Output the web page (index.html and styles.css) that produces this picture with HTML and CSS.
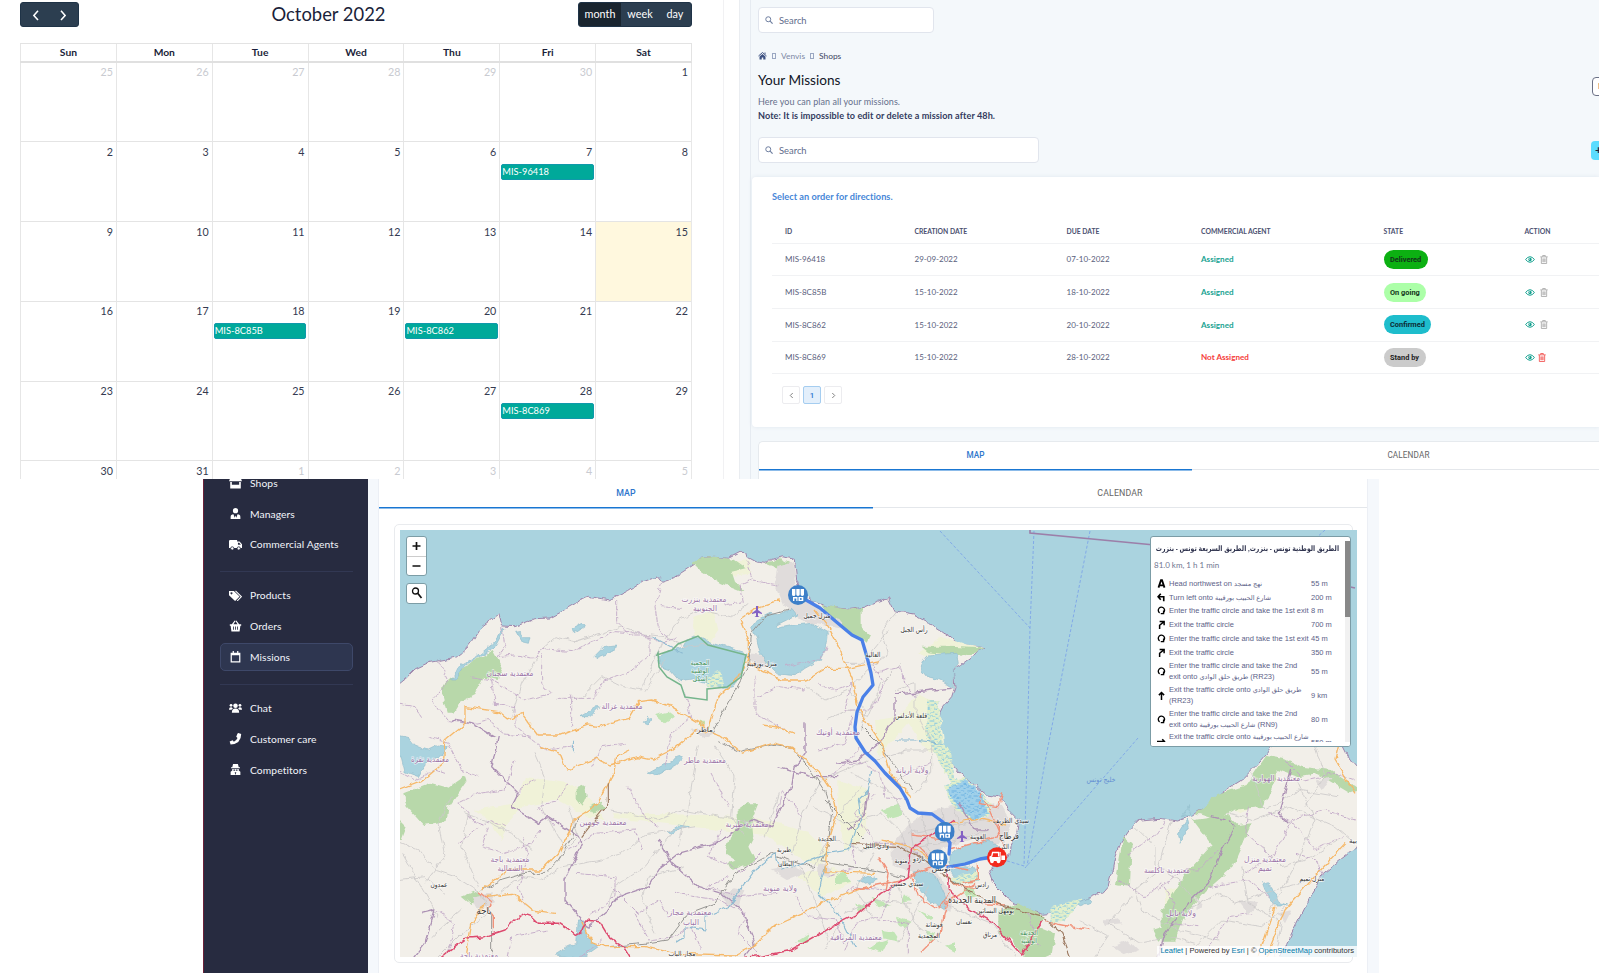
FILE: index.html
```html
<!DOCTYPE html>
<html lang="en">
<head>
<meta charset="utf-8">
<title>Missions</title>
<link rel="stylesheet" href="styles.css">
</head>
<body>
<svg class="defs" width="0" height="0">
  <symbol id="search" viewBox="0 0 16 16"><circle cx="6.5" cy="6.5" r="5" fill="none" stroke="currentColor" stroke-width="2"/><path d="M10.2 10.2l5 5" stroke="currentColor" stroke-width="2.4"/></symbol>
  <symbol id="eye" viewBox="0 0 18 12"><path d="M1 6Q9-4 17 6Q9 16 1 6z" fill="none" stroke="currentColor" stroke-width="1.8"/><circle cx="9" cy="6" r="3" fill="currentColor"/><circle cx="8" cy="5" r="1" fill="#fff"/></symbol>
  <symbol id="trash" viewBox="0 0 14 17"><path d="M0 3.5h14M4.5 3V1h5v2M2 4v12h10V4M5 6.500v7M7 6.500v7M9 6.500v7" fill="none" stroke="currentColor" stroke-width="1.500"/></symbol>
  <symbol id="shop" viewBox="0 0 20 20"><circle cx="10" cy="10" r="10" fill="#3c7fc8"/><path d="M4 4h3.400v5.500a1.700 1.500 0 0 1-3.400 0zM8.300 4h3.400v5.500a1.700 1.500 0 0 1-3.400 0zM12.600 4H16v5.500a1.700 1.500 0 0 1-3.400 0zM5 12h4.500v4H8.300v-2.500H6.400V16H5zM10.500 12h4.800v4h-4.800z" fill="#fff"/><circle cx="12.800" cy="14" r="1" fill="#3c7fc8"/></symbol>
  <symbol id="loop" viewBox="0 0 12 12"><path d="M3.500 9.200A4.200 4.200 0 1 1 8 9.400M8.800 6v4.200H5" fill="none" stroke="#000" stroke-width="1.800"/></symbol>
  <symbol id="slight" viewBox="0 0 12 12"><path d="M3.500 12V7L9 2.500M3.500 2H9.500V7" fill="none" stroke="#000" stroke-width="2"/></symbol>
</svg>

<main class="page">
<div class="top">
  <section class="calendar">
    <header class="cal-head">
      <div class="arrows"><svg viewBox="0 0 59 25"><path d="M17 8.500l-4.500 5 4.500 5M42 8.500l4.500 5-4.500 5" fill="none" stroke="#fff" stroke-width="1.700"/></svg></div>
      <h1>October 2022</h1>
      <div class="views"><span class="on">month</span><span>week</span><span>day</span></div>
    </header>
    <div class="days">
      <b>Sun</b><b>Mon</b><b>Tue</b><b>Wed</b><b>Thu</b><b>Fri</b><b>Sat</b>
    </div>
    <div class="cells">
      <div class="off">25</div><div class="off">26</div><div class="off">27</div><div class="off">28</div><div class="off">29</div><div class="off">30</div><div>1</div>
      <div>2</div><div>3</div><div>4</div><div>5</div><div>6</div><div>7<p>MIS-96418</p></div><div>8</div>
      <div>9</div><div>10</div><div>11</div><div>12</div><div>13</div><div>14</div><div class="today">15</div>
      <div>16</div><div>17</div><div>18<p>MIS-8C85B</p></div><div>19</div><div>20<p>MIS-8C862</p></div><div>21</div><div>22</div>
      <div>23</div><div>24</div><div>25</div><div>26</div><div>27</div><div>28<p>MIS-8C869</p></div><div>29</div>
      <div>30</div><div>31</div><div class="off">1</div><div class="off">2</div><div class="off">3</div><div class="off">4</div><div class="off">5</div>
    </div>
  </section>

  <section class="missions">
    <div class="intro">
      <div class="search short"><svg><use href="#search"/></svg>Search</div>
      <nav class="crumbs">
        <svg viewBox="0 0 18 16"><path d="M1 8l8-7 8 7" fill="none" stroke="#3f5383" stroke-width="2"/><path d="M3 9l6-5.200L15 9v6h-4.500v-4h-3v4H3zM13 1h2v4l-2-2z" fill="#3f5383"/></svg>
        <i></i><span>Venvis</span><i></i><span class="here">Shops</span>
      </nav>
      <div class="title-row"><h2>Your Missions</h2></div>
      <p class="lead">Here you can plan all your missions.</p>
      <p class="note">Note: It is impossible to edit or delete a mission after 48h.</p>
      <div class="search long"><svg><use href="#search"/></svg>Search</div>
      <span class="edge-btn outline">N</span>
      <span class="edge-btn add">+</span>
    </div>
    <div class="orders">
      <h3>Select an order for directions.</h3>
      <div class="table">
        <div class="tr th"><span>ID</span><span>CREATION DATE</span><span>DUE DATE</span><span>COMMERCIAL AGENT</span><span>STATE</span><span>ACTION</span></div>
        <div class="tr"><span>MIS-96418</span><span>29-09-2022</span><span>07-10-2022</span><span class="ok">Assigned</span><span><em class="delivered">Delivered</em></span><span class="acts"><svg class="eye"><use href="#eye"/></svg><svg class="bin"><use href="#trash"/></svg></span></div>
        <div class="tr"><span>MIS-8C85B</span><span>15-10-2022</span><span>18-10-2022</span><span class="ok">Assigned</span><span><em class="going">On going</em></span><span class="acts"><svg class="eye"><use href="#eye"/></svg><svg class="bin"><use href="#trash"/></svg></span></div>
        <div class="tr"><span>MIS-8C862</span><span>15-10-2022</span><span>20-10-2022</span><span class="ok">Assigned</span><span><em class="confirmed">Confirmed</em></span><span class="acts"><svg class="eye"><use href="#eye"/></svg><svg class="bin"><use href="#trash"/></svg></span></div>
        <div class="tr"><span>MIS-8C869</span><span>15-10-2022</span><span>28-10-2022</span><span class="no">Not Assigned</span><span><em class="standby">Stand by</em></span><span class="acts"><svg class="eye"><use href="#eye"/></svg><svg class="bin red"><use href="#trash"/></svg></span></div>
      </div>
      <div class="pager">
        <span><svg viewBox="0 0 6 8"><path d="M4.500 1L1.500 4l3 3"/></svg></span><span class="on">1</span><span><svg viewBox="0 0 6 8"><path d="M1.500 1l3 3-3 3"/></svg></span>
      </div>
    </div>
    <div class="tabs upper"><span class="on">MAP</span><span>CALENDAR</span></div>
  </section>
</div>

<div class="bottom">
  <aside class="side">
    <a><svg viewBox="0 0 16 14"><path d="M2 0h12l2 5H0zM1.500 6h2v3.500h9V6h2v8h-13z"/></svg>Shops</a>
    <a><svg viewBox="0 0 16 14"><circle cx="8" cy="3.200" r="3.200"/><path d="M2 14V11Q2 7.500 5.500 7.500L7 12l1-3 1 3 1.500-4.500Q14 7.500 14 11v3z"/></svg>Managers</a>
    <a><svg viewBox="0 0 16 14"><path fill-rule="evenodd" d="M1 1h9v2h3l3 3.500V11H0V2zM11 4.500V7h3.600L12.600 4.500z"/><circle cx="4" cy="11.500" r="2" stroke="#272b40"/><circle cx="12" cy="11.500" r="2" stroke="#272b40"/></svg>Commercial Agents</a>
    <hr>
    <a><svg viewBox="0 0 16 14"><path fill-rule="evenodd" d="M0 1h6l7 7-5.500 5.500L0 6.500zM3 2.800a1.200 1.200 0 1 0 .1 0z"/><path d="M8 1l7.200 7-5.200 5.500" fill="none" stroke="#fff" stroke-width="1.300"/></svg>Products</a>
    <a><svg viewBox="0 0 16 14"><path fill-rule="evenodd" d="M1 5h2.500L7 .5l1 .8L5.500 5h5L8 1.300l1-.8L12.500 5H15v2h-1l-1 7H3L2 7H1zM5 8v4h1V8zM7.500 8v4h1V8zM10 8v4h1V8z"/></svg>Orders</a>
    <a class="on"><svg viewBox="0 0 16 14"><path fill-rule="evenodd" d="M2 2h2.500V0H6v2h4V0h1.500v2H14v12H2zM3.500 5v7.500h9V5z"/></svg>Missions</a>
    <hr>
    <a><svg viewBox="0 0 16 14"><circle cx="8" cy="4.500" r="2.800"/><circle cx="2.500" cy="4" r="1.700"/><circle cx="13.500" cy="4" r="1.700"/><path d="M3.500 13q0-5 4.500-5t4.500 5zM0 9q0-2.800 3-2.500L4.800 8 3 9.500H0zM16 9q0-2.800-3-2.500L11.200 8 13 9.500h3z"/></svg>Chat</a>
    <a><svg viewBox="0 0 16 14"><path d="M11.500 0L15 1q0 12-13 13L.8 10.500 4.500 8.800 6 10.600q3-1.300 4.500-4.600L8.900 4.500 10.500.5z" /></svg>Customer care</a>
    <a><svg viewBox="0 0 16 14"><path fill-rule="evenodd" d="M5 0h6l1 4h1.500v1.200h-11V4H4zM4 6h8v2l2 1.500V14H2V9.500L4 8zM5.500 6.800v1.400h2V6.800zM8.500 6.800v1.400h2V6.800zM7 10l1 3.500L9 10z"/></svg>Competitors</a>
  </aside>
  <section class="content">
    <div class="tabs lower"><span class="on">MAP</span><span>CALENDAR</span></div>
    <div class="map-card">
    <div class="map">
<svg class="world" viewBox="400 530 957 427">
<defs>
<filter id="rough" filterUnits="userSpaceOnUse" x="390" y="520" width="980" height="450" color-interpolation-filters="sRGB"><feTurbulence type="fractalNoise" baseFrequency=".12" numOctaves="2" seed="4"/><feDisplacementMap in="SourceGraphic" scale="6" xChannelSelector="R" yChannelSelector="G"/></filter>
<pattern id="marsh" width="22" height="15" patternUnits="userSpaceOnUse"><rect width="22" height="15" fill="#e2efcb"/><path d="M1 3h11M12 10h9" stroke="#7fc5e6" stroke-width="3"/></pattern>
<pattern id="flat" width="22" height="15" patternUnits="userSpaceOnUse"><rect width="22" height="15" fill="#9fd0ea"/><path d="M1 3h12M12 10h9" stroke="#62ace0" stroke-width="2.500"/></pattern>
</defs>
<rect x="390" y="520" width="980" height="450" fill="#aad3df"/>
<g filter="url(#rough)">
<g class="land">
<path transform="translate(395 520) scale(.33333)" d="M-10 510L30 478 60 447 100 428 130 422 180 412 215 385 235 360 260 320 312 280 320 318 360 320 420 296 465 294 510 270 545 250 548 240 580 229 620 236 645 240 700 212 745 182 785 168 800 187 830 177 900 132 915 115 960 112 1000 115 1035 97 1052 98 1056 112 1080 125 1110 130 1130 118 1165 110 1198 118 1205 180 1215 205 1245 240 1265 250 1305 262 1365 268 1405 262 1445 245 1480 233 1500 275 1555 285 1595 305 1635 330 1670 355 1685 375 1735 380 1772 383 1740 395 1725 415 1705 430 1685 440 1675 455 1680 500 1670 530 1645 560 1635 580 1630 610 1635 640 1650 690 1668 725 1695 760 1745 800 1775 825 1810 830 1830 850 1845 875 1870 900 1865 940 1845 980 1840 1010 1805 1035 1780 1050 1795 1090 1835 1130 1885 1165 1945 1183 1985 1178 2045 1150 2120 1118 2140 1095 2150 1060 2160 1010 2173 975 2190 950 2205 928 2235 900 2295 895 2345 903 2395 885 2445 850 2485 815 2540 780 2580 740 2615 700 2627 680 2700 640 2800 640 2845 680 2865 720 2900 760L2900 970 2835 1020 2785 1060 2745 1130 2705 1210 2650 1320L-10 1320Z"/>
</g>
<g transform="translate(395 520) scale(.33333)">
<g class="field">
<path d="M895 290l60-20 15 60-50 70-25-45zM970 130l90-10 10 40-70 10zM390 770l130 20 70 50 40 60-50-10-90-50-110 20-40 40-20 60-40-60-40-30 120-20zM650 880l300 5 190 20 100 30 60 60-20 50-80-40-90-60-450-50zM1330 780l90 30-10 140-60 50-20-120zM1200 1060l120-20 50 50-90 40zM1440 600l70-10 60-70 60 30 20 140-50 10-60-90-90 100z"/>
<path d="M1570 400l70-50 70 25 60 8-60 15-130 10zM2470 840l90-50 20 60-40 30zM2310 1110l80-20 10 60-90 90z"/></g>
<g class="wood">
<path d="M138 500l30-25 60-50 40-20 25-15 30 55-15 35-40-10-30 55-40 20-20 33-20 0zM895 130l20-15 45-5 60 10 35 25-45 10 10 30 35 35-75-30-60-35zM1110 130l45-15 40 20-35 15zM1275 255l90 14 35-6v60l28 25-10 20-30-14-70-50zM1580 380l80 0 110 5-70 22-100-10zM25 820l80-32 55 15 50-35 5 15-55 80-5 40-70 12-50-55zM15 900l20 20-15 40-20 0zM1025 870l30-20 35 0-20 50 5 50-15 30 20 40-30 20-60-40 15-50 20-30zM1000 1030l50-15 20 10-60 25zM545 805l25-10 5 30-15 35-15-20zM580 860l40-15 10 20-30 20zM200 1130l50-20 20 20-40 25z"/>
<path d="M2615 705l55 10 50 25 90 10 85 60-30 10-100-60-60 10-60-20 0 20-40 90-90 10-50 30-60-20 60-55 90-30zM2185 950l25 20-5 130-45-5zM2400 900l100-15 30 30 40-5-60 135-80 70-60 70-30 80-40 0 0-90 70-110 80-90-60-80zM1810 1170l60-20 80 40-20 30 50 20-10 60-70 30-50-70-40-20zM2270 1230l30-10 10 30-20 15z"/>
</g>
<g class="wood small"><path d="M780 585l40-10 20 15-30 20zM910 605l20 0 0 10-20 0zM1320 1070l30-15 20 30-50 10zM1430 1130l60 25-40 10zM1500 1190l50 15-20 20-20-10zM1570 1170l50 25-10 10zM1460 1230l35 5 20 30-50-10zM1200 1265l40-25 0 30zM1460 870l50-20 15 35-35 10zM1700 1110l30-8 20 30-30 5zM1420 1280l60-20-20 40zM1380 1150l30 10-15 20zM1590 1230l30 10-10 30zM1530 1120l20 20-30 5zM1650 1280l30-10 0 25z"/></g>
<g class="urban">
<path d="M1150 140l45-15 10 80 50 50 90 55-10 15-110-20-60-50-25-60zM1060 400l60 5 20 30-50 10-30-25zM1540 915l40-30 60-20 40-10 60 20 50 0 20-30 30 50-10 60-30 20-60-20-100 30-20 60 50 80 0 50-40-10-80-110-60-20 0-60zM1740 860l60-10 50 60-20 60-40-40zM885 630l50-10 25 20-30 15zM1130 1050l60-10 40 20-50 20zM230 1130l60-10 10 30-50 20zM2120 1195l40 0 20 15-50 5zM1270 1030l40 15-10 30-30-10zM985 1120l35-15 25 5-15 50-40-10zM2760 780l50-10-30 40zM2530 1140l60 10-30 30zM2650 1180l40-10-20 40zM2400 1130l25 30-20 10zM2150 1280l50-20 30 30-40 15z"/></g>
<g class="water">
<path d="M1085 300l40-20 30 5 35-20 15 20-60 30 0 10 50-10 55-5 50 28-5 42-20 40-45 25-30 22-50-5-30-28-25-37-10-40-15-35z"/>
<path d="M790 410l30-18 45-10 10-20 30-15 40 20 60 18 50 15-10 50-30 50-30 5-40-10-50-15-40 5-30-35-30-10zM1575 445l20-40 90-5 5 30-15 20 0 55-40-25-40-10zM535 325l28-15 5 8-30 20zM597 410l30-30 35-5-5 18-50 20zM360 330l25 20 20 0-5 20-20-5zM170 480l15-35 60-35 50-40 30-45 5 0-30 55-40 25-50 30-30 45zM0 640l40 10 20 25 40 15 30-15 30 5-20 25-50 30-20 35-40-15zM555 590l50-30 10 0-30 30zM745 610l12-18 8 5-8 18zM760 760l90-50 12 5-20 20-60 32zM820 935l30-20 30 5-50 20zM550 1200l20 0 5 50 35 30-50 35-80-10 40-25 25-10z"/>
<path d="M1665 1005l35-25 85-20 20 25-15 28-60 17-65 15zM1665 1052l45-12 40 5-20 22-50 5zM1555 1060l40-10 30 20 30 70-10 25-40-20-40-50zM2360 890l20-30 10 30zM2350 940l25-40 5 20-25 50zM2600 1080l30 20 20 45 25 10-40 0-20-35zM2040 1150l40-15 10 10-30 12zM1390 1080l40-15 20 15-40 10z"/></g>
<path fill="url(#marsh)" d="M1600 540l30 0 10 120 30 90-20 10-40-80-20-30zM1630 660l30 20 20 90 30 30-30 10-40-80zM935 470l40-20 10 50-50 5zM1970 1160l90-25-10 20-40 50-45 5zM1670 1070l80-15 0 30-70 10zM1650 800l60-30 80 80-10 40-50 10-60-40z"/>
<path fill="url(#flat)" d="M1660 810l50-30 50 35 15 65-35 20-50-35-30-50z"/>
</g>
<g transform="translate(395 520) scale(.33333)" class="lines">
<path class="minor" d="M440 385l40-35 60 15 60-20 80-25 50 20 80 10 60 30 80-10M560 530l60-60 60 30 60 10 60-140M750 515l60-100M810 360l40-60 60-30 100 20 50-40M350 590l30-100 50-80M0 960l70 30 50 60 60 20 80 50 20 60-80 60-90 90M200 880l70 20 80 40 60 50M420 700l30 70-10 90 70 130M300 1130l80-60 60 10 60-40 120-20 60-20 80-60 140-20M640 1160l20-60 90-60 80-100M650 870l140 30 70-30 120 20 120 20M850 980l30-120 30-190M960 680l60 90-10 120 40 60M1240 1070l60-110 20-60 80-100M1110 950l40-130M1190 1010l30-120 60-110 140-60M1300 1260l-60-170-30-60M520 860l30 90-40 40M90 1090l60-80-20-100 40-80M110 1250l90-80M250 1100l-50-120 20-100M780 1240l-40-110 20-60 110-30M0 1080l90-10 60 50M20 1000l110 190"/>
<path class="minor" d="M1290 600l70-30 60 20 40-100 60-60M1230 500l60 40 70-30 50 60-10 60M1370 500l60-60 50-40-20-70 50-60M1480 330l-80 100-50 0M1500 510l60-20 0 80 50 100 0 90-50 60M1440 720l90-30 90 0M1370 760l120 60 50 80M1250 860l110 50 100-30 60 60 30 90M1320 960l80 30 90-10M1440 1000l-60 110 60 90M1500 1080l60 130 80 60M1600 1100l-90 170M1640 1150l150 60 70 100M1350 1180l90-40 110 10M1290 1290l50-90M1540 900l20 100 50 40M1580 880l30 140M1640 860l10 100M1680 860l20 90M1540 940l120-20 120-20M1540 980l110-10 130-40"/>
<path class="minor" d="M2220 920l60 60 0 80-60 50 20 60 110 60 120 30M2330 900l-40 140 60 40 50 60M2210 1130l-70 80 90 60 100-20 70 20M2380 1170l90-50 50 30 120-40 110-30M2500 880l80 20 100-40 140 60 60 50M2570 760l40 110 100-60 120 20M2600 980l60 60 90-30 80-50M2540 1040l20 110 100 60-20 100M2700 770l60 130-50 120-90 160M2400 1280l80-80 120 20 70-60M2750 650l40 120-60 90M2050 1200l90 50-40 60"/>
<path class="admin" d="M130 422l30 60-50 60 50 60 70 10 50-10 50 40 80 10M320 320l10 60-20 30 50-5 60 10 20-30 90 10 80-40 50-20 80 5 60 30 50-20M665 240v70l40 35 60 0 0 60-60 50-80 30-30 50-110 0M800 190l-20 70 10 60 30 40M860 265l-60-5M1055 125l20 50-40 20 10 50-60 10M1060 180l90 15M440 400l0 90 30 30-80 20-100-60-60-10M0 550l60 10 20 30M290 480l10 70 60 10 0 60 90 70 90-10M530 620l0-100M870 520l20 70-60 50-20 100M1080 470v110l90 50M1300 380l-30 40-100 20M1090 530l60-30 80 10"/>
<path class="admin strong" d="M310 650l-20 90 80 80-20 40 80 50 30-20 90 60 10 20-50 110 0 60 70 80 60-50 30-40 90-30 30-50 60-50 110-30 110-70 60 20 60-120 10-60 30-40 0-90M790 960l40 70 80 70 70 20 60 50 40 100-30 40M1500 520l30 0 80-10 60-5M1500 530l0 60-40 70-70 60-70 10M80 1180l40-10-30 100-40 50M1150 740l100 30 80 0M170 600l60 10 70 40"/>
<path class="admin" d="M360 720l-30 90-80 10-60 30 50 60 30 10M430 770l-60 40M0 750l60 30 60-30 30 10M100 650l60 20 40 80 50 20M190 970l90-70 50 20M280 920l-20 60 70 20 80-30 30-40M380 950l20 60-30 90 20 60M520 990l80-50 120-10 20 60M540 1060l120 10 0 60-80 60M650 1100l80 80 60-40 30 50M720 1180l40 80 80-10 50-30 30 70M840 1120l130 20 80 40-20 60 60 60M1000 1070l-60 30 90 30 120-10M1100 1000l-60 60-40-30-60-20 40-80M950 760l50 100M1220 890l-60-80-20 100M1200 1130l40 60 80 10 30 70M480 920l-50-60 50-10 40-60M590 740l30-60 70-10M700 800l50 90 40 30M160 1300l20-90-60-40M340 1310l10-60 110-20M550 1320l70-60"/>
<path class="admin" d="M1270 490l50 20 50-20-20 80 80 0 40-80-40-60M1440 460l80-20 10 50 30 40M1270 690l80-20 20-80M1320 730l90 0 50 40 10 60 70 10M1440 820l-60 60 60 90 90 0 50 50M1370 970l10 70-80 30M1320 1160l50-60 100 10M1500 790l50-40 60-20M1490 1100l-30 90-80 20-30 80M1540 1300l0-90-90-10M1900 1180l30 100M2170 1080l80 50 50-40 40 60-20 60 90 10M2200 1000l90-60 20-40M2290 1110l70-60 50 0 60-60M2560 860l-10 80 80 70-80 50M2630 1020l60-120 100-30 90 30M2620 880l80 30 60 80 80-40M2670 720l60 60 90-20 60 20M2700 1000l60 20 30 50M2440 1100l120-20 60 50M2440 1290l60-100 70-10M1400 680l-90 90"/>
<path class="admin strong" d="M2500 900l20 20-40 70-40 100-60 60-70 90-20 70M2450 890l40 10M2690 750l-40 130 30 30M1420 810l-10 70-50 50M1690 850l50 80 40 0"/>
<path class="rail" d="M260 1110l60-30 70-20 60 0 40-40 40-70 20-60M950 640l110-200 10-100 40-50 70-20M970 665l60 30 100-20 60 10 60 70 40 60 20 60-10 100-20 50 150 25 100 20M290 1180l0 130M640 1280l110-10 70-10 60-80 80-30 60-90 110-60 50 20 80 20M1400 620l60 60 90 130M1290 840l120 120"/>
<path class="river" d="M840 1270l30-20 0-30 60 10 0-40 70-30 80-110 60-50 20 50 60-20 80-30 60-10 20-60 20-30-10-60 30-30 10-60M1290 1040l-20 80 60 60 50 100M770 350l90 50M535 660l0 40M1500 660l60 0 80 10"/>
<path class="orange" d="M150 660l60-50 0-50 100 15 30 25 40-20 50 65 70 0 80-30 30 5 90-25 30-50 40-5 60 20 100 60M905 630l-70 60-60 30-50-10-80 25-40-20-90 35-20-50-60-20M1200 640l-60-20-40-5M1155 240l-60 20-60 40 25 60 0 60-30 50-60 60-30 100M920 630l60 20 60 50 90-30 60 15 80 70 40 60 15 70-15 50-15 50-5 70 150 5M1060 430l60 30 40 20 70 0 60-35 70 0 90-20M1260 270l40 50 30 60 40 90 20 100 70 100 30 100 60 60M150 660l-5 70-60 50-80 30M260 1110l80-60 100 0 50-50 40-80 5-20 70-45 50-90 10-55 40-20M270 1130l80-10 60 50 70 10M270 1150l-40 60-15 90M560 1205l30 60 40 15 120 0 90 20 180 5 60-30 60-60 90-40 60-30 140-50M2840 640l-20 80 60 100M2850 970l-100 110-80 90-60 150M1460 960l90 20 70 50M2590 1310l50-150M1660 910l90-15 80 20"/>
<path class="red" d="M1760 820l-10 30 60 10 10-40M1770 840l30 70 30 70M1550 945l80 10 20-10M1660 990l150-40 0-40M1560 970l60 60 100 20M1450 1010l30 50 -10 50M1370 1110l150-30 90-40M1550 1070l20 60 60 40 40-60M1655 1150l-20 90-60 60M1750 1030l0 50-50 10M1660 1070l30 30 50 5M1650 1150l90-60M1750 1150l80 5M1950 1205l50 10 80 15M255 1115l35 30-10 20 15 20 0 40"/>
<path class="motor" d="M130 1320l80-65 60-5 60-20 50-50 30 10 20 20 60 0 30 20 20 15 20-10 15-35 40 5 30 50 40 25 30 50M1010 1320l80-10 100-20 140-80 60-30 70-60 80-50 10-90 70-40 60-40M1655 1045l5 60 60 60 70 40 90 100 60-100"/>
<path class="brown" d="M1640 1060l90 60 100 40 110 30 60 50 30 80M1370 970l140 10 120 60M640 790l0 60-80 100"/>
</g>
</g>
<g class="ferry"><path d="M940 531L1030 628M1034 531L1030 628 1027 760 1024 866 1004 860M1090 531L1045 762 1027 866M1138 738L1025 868M1325 530l-10 9"/></g>
<path class="frontier" d="M1030 528v5l135 13 190 42"/>
<path class="park" d="M657 655l15-5 6-6 20-8 10 9 38 10-5 22-14 10-20 2 0 11-22-3-4-12-14-8-8-10-1-14z"/>
<path class="route" d="M806 600L820 608 840 625 852 635 862 640 867 657 871 673 873 685 863 697 857 712 855 727 856 738 865 752 875 761 885 773 900 788 907 800 910 808 918 813 932 814 943 822M948 840L950 843 949 854M948 867L965 864 980 859 992 857"/>
<g class="labels">
<text x="704" y="602" textLength="45">معتمدية بنزرت</text><text x="705" y="611" textLength="24">الجنوبية</text><text x="510" y="676" textLength="47">معتمدية سجنان</text><text x="622" y="709" textLength="41">معتمدية غزالة</text><text x="838" y="735" textLength="44">معتمدية أوتيك</text><text x="430" y="762" textLength="38">معتمدية نفزة</text><text x="705" y="763" textLength="42">معتمدية ماطر</text><text x="603" y="825" textLength="47">معتمدية جومين</text><text x="747" y="827" textLength="43">معتمدية طبربة</text><text x="510" y="862" textLength="39">معتمدية باجة</text><text x="510" y="871" textLength="25">الشمالية</text><text x="780" y="891" textLength="34">ولاية منوبة</text><text x="690" y="915" textLength="43">معتمدية مجاز</text><text x="691" y="925" textLength="16">الباب</text><text x="479" y="958" textLength="38">معتمدية باجة</text><text x="856" y="940" textLength="52">معتمدية المرناقية</text><text x="912" y="773" textLength="33">ولاية أريانة</text><text x="1276" y="781" textLength="48">معتمدية الهوارية</text><text x="1167" y="873" textLength="46">معتمدية تاكلسة</text><text x="1265" y="862" textLength="42">معتمدية منزل</text><text x="1265" y="871" textLength="14">تميم</text><text x="1181" y="916" textLength="30">ولاية نابل</text>
<g class="town"><text x="762" y="666" textLength="30">منزل بورقيبة</text><text x="705" y="732" textLength="16">ماطر</text><text x="817" y="618" textLength="27">منزل جميل</text><text x="914" y="632" textLength="27">رأس الجبل</text><text x="873" y="657" textLength="15">العالية</text><text x="911" y="718" textLength="32">قلعة الأندلس</text><text x="439" y="887" textLength="17">عمدون</text><text x="827" y="841" textLength="18">الجديدة</text><text x="784" y="852" textLength="14">طبربة</text><text x="786" y="866" textLength="16">البطان</text><text x="876" y="848" textLength="26">وادي الليل</text><text x="901" y="863" textLength="13">منوبة</text><text x="919" y="861" textLength="12">باردو</text><text x="978" y="839" textLength="16">العوينة</text><text x="1011" y="823" textLength="36">سيدي الظريف</text><text x="1003" y="849" textLength="12">الكرم</text><text x="941" y="871" textLength="19">تونس</text><text x="907" y="886" textLength="33">سيدي حسين</text><text x="982" y="887" textLength="14">رادس</text><text x="995" y="913" textLength="38">بومهل البساتين</text><text x="964" y="924" textLength="16">نعسان</text><text x="934" y="927" textLength="17">فوشانة</text><text x="929" y="938" textLength="22">المحمدية</text><text x="990" y="937" textLength="14">مرناق</text><text x="682" y="956" textLength="27">مجاز الباب</text><text x="1312" y="881" textLength="25">منزل تميم</text><text x="1353" y="843" textLength="8">بية</text><g class="city"><text x="484" y="914" textLength="15">باجة</text><text x="1009" y="839" textLength="20">قرطاج</text><text x="972" y="903" textLength="48">المدينة الجديدة</text></g></g>
<g class="green"><text x="700" y="665" textLength="19">المحمية</text><text x="700" y="673" textLength="18">الوطنية</text><text x="700" y="681" textLength="15">إشكل</text><text x="1029" y="935" textLength="18">الحديقة</text><text x="1029" y="943" textLength="16">الوطنية</text></g>
<text class="sea" x="1101" y="782" textLength="29">خليج تونس</text>
</g>
<g fill="#8461c4"><path id="plane" d="M756 606h2v4l4 3v1l-4-1v3l1.500 1h-5l1.500-1v-3l-4 1v-1l4-3z"/><use href="#plane" x="205" y="225"/></g>
<use href="#shop" x="788" y="585" width="20" height="20"/><use href="#shop" x="934.700" y="821.700" width="20" height="20"/><use href="#shop" x="927.700" y="849.300" width="20" height="20"/>
<circle cx="997" cy="857.300" r="10" fill="#f32a1e"/><path d="M990 859.500v-2.500l1.800-1 .8-3.500h6v4" fill="none" stroke="#fff" stroke-width="1.300"/><path d="M990 857h9.500v4h-9.500zM1001.300 855.500h3.700v4.500h-3.700zM999.500 852h1.200v9h-1.200z" fill="#fff"/><circle cx="992" cy="861.500" r="1.800" fill="#fff"/><circle cx="998.500" cy="861.500" r="1.800" fill="#fff"/>
</svg>
    <div class="controls">
      <div class="zoom"><span><svg viewBox="0 0 18 18"><path d="M5 9h8M9 5v8"/></svg></span><span><svg viewBox="0 0 18 18"><path d="M5 9h8"/></svg></span></div>
      <div class="zoom one"><span><svg viewBox="0 0 18 18"><circle cx="8" cy="7" r="3" stroke-width="1.300"/><path d="M10 9l4 5"/></svg></span></div>
    </div>
    <div class="route-panel">
      <div class="bar"></div>
      <h4>الطريق الوطنية تونس - بنزرت, الطريق السريعة تونس - بنزرت</h4>
      <p class="sum">81.0 km, 1 h 1 min</p>
      <div class="step"><svg viewBox="0 0 12 12"><path d="M2 11.500L5.300 1.500h1.400L10 11.500M3.500 8.500h5" fill="none" stroke="#000" stroke-width="2.400"/></svg><span>Head northwest on <bdi>نهج مسجد</bdi></span><span>55 m</span></div>
      <div class="step"><svg viewBox="0 0 12 12"><path d="M5 1L1.500 5 5 9M2 5h7v6" fill="none" stroke="#000" stroke-width="2.200"/></svg><span>Turn left onto <bdi>شارع الحبيب بورقيبة</bdi></span><span>200 m</span></div>
      <div class="step"><svg><use href="#loop"/></svg><span>Enter the traffic circle and take the 1st exit</span><span>8 m</span></div>
      <div class="step"><svg><use href="#slight"/></svg><span>Exit the traffic circle</span><span>700 m</span></div>
      <div class="step"><svg><use href="#loop"/></svg><span>Enter the traffic circle and take the 1st exit</span><span>45 m</span></div>
      <div class="step"><svg><use href="#slight"/></svg><span>Exit the traffic circle</span><span>350 m</span></div>
      <div class="step two"><svg><use href="#loop"/></svg><span>Enter the traffic circle and take the 2nd<br>exit onto <bdi>طريق حلق الوادي</bdi> (RR23)</span><span>55 m</span></div>
      <div class="step two"><svg viewBox="0 0 12 12"><path d="M6 12V2M2.500 5.500L6 2l3.500 3.500" fill="none" stroke="#000" stroke-width="2"/></svg><span>Exit the traffic circle onto <bdi>طريق حلق الوادي</bdi><br>(RR23)</span><span>9 km</span></div>
      <div class="step two"><svg><use href="#loop"/></svg><span>Enter the traffic circle and take the 2nd<br>exit onto <bdi>شارع الحبيب بورقيبة</bdi> (RN9)</span><span>80 m</span></div>
      <div class="step two last"><svg viewBox="0 0 12 12"><path d="M0 6h10M7 3l3 3-3 3" fill="none" stroke="#000" stroke-width="2"/></svg><span>Exit the traffic circle onto <bdi>شارع الحبيب بورقيبة</bdi></span><span>550 m</span></div>
    </div>
    <div class="credit"><a>Leaflet</a> | Powered by <a>Esri</a> | © <a>OpenStreetMap</a> contributors</div>
    </div>
    </div>
  </section>
</div>
</main>
<script src="labels.js"></script>
</body>
</html>
```

FILE: labels.js
```js
// Scale glyphs together with spacing so joined Arabic letters stay connected.
document.querySelectorAll('.labels text').forEach(function (t) {
  t.setAttribute('lengthAdjust', 'spacingAndGlyphs');
});
```

FILE: styles.css
```css
* { box-sizing: border-box; }
body { margin: 0; background: #fff; font-family: Lato, "DejaVu Sans", sans-serif; color: #1b1f3a; }
h1, h2, h3, h4, p { margin: 0; }
.defs { position: absolute; }
.page { width: 1599px; height: 973px; overflow: hidden; }
.top { display: flex; height: 479px; overflow: hidden; }

.calendar { width: 724px; flex: none; padding: 2px 31px 0 20px; border-right: 1px solid #f1f1f3; }
.cal-head { display: flex; justify-content: space-between; height: 25px; }
.arrows { width: 59px; height: 25px; background: #2c3e50; border-radius: 3px; border: 1px solid #1f3347; }
.arrows svg { display: block; width: 57px; height: 23px; }
.cal-head h1 { font-weight: 400; font-size: 18.4px; line-height: 24px; }
.views { display: flex; width: 114px; background: #2c3e50; border-radius: 3px; border: 1px solid #1f3347; overflow: hidden; color: #fff; font-size: 10.8px; line-height: 22px; }
.views span { text-align: center; width: 38px; }
.views span:nth-child(3) { width: 32px; }
.views .on { background: #1a252f; width: 42px; }
.days { display: grid; grid-template-columns: repeat(7, 1fr); margin-top: 16px; height: 19.5px; border: 1px solid #e3e3e3; border-left: 0; border-bottom: 2px solid #e0e0e0; text-align: center; font-size: 10.3px; line-height: 16.500px; }
.days b { border-left: 1px solid #e6e6e6; font-weight: 700; }
.cells { display: grid; grid-template-columns: repeat(7, 1fr); grid-auto-rows: 79.8px; border-right: 1px solid #e8e8e8; }
.cells div { border-left: 1px solid #e6e6e6; border-bottom: 1.500px solid #e4e4e4; text-align: right; padding: 2.500px 3px 0 1px; font-size: 10.7px; line-height: 13px; color: #343a50; }
.cells .off { color: #c9cbd1; }
.cells .today { background: #fff8de; }
.cells p { margin: 6px -1.500px 0 0; height: 16px; background: #00a99a; border: 1px solid #1099ab; border-radius: 2px; color: #fff; font-size: 9.3px; line-height: 14px; text-align: left; }

.missions { flex: 1; margin-left: 15px; background: #f4f8fb; border-left: 1px solid #eaedf1; position: relative; overflow: hidden; min-width: 0; }
.missions::before { content: ""; position: absolute; left: 10px; top: 0; width: 1px; height: 100%; background: #e6ebf1; }
.intro { padding: 7px 0 0 18px; height: 177px; }
.search { display: flex; align-items: center; height: 26px; background: #fff; border: 1px solid #e1e5ed; border-radius: 4px; padding-left: 6px; font-size: 9.4px; color: #5f6d8c; }
.search svg { width: 8px; height: 8px; margin-right: 6px; color: #6f7fa0; }
.short { width: 176px; }
.long { width: 281px; margin-top: 14px; }
.crumbs { display: flex; align-items: center; margin-top: 16px; height: 14px; font-size: 8.400px; color: #7c88a5; }
.crumbs svg { width: 9px; height: 8px; }
.crumbs i { width: 4px; height: 6px; border: 1px solid #9aa7c2; margin: 0 5px; }
.crumbs .here { color: #3d4563; }
.title-row { height: 27px; margin-top: 5px; }
.title-row h2 { font-size: 13.6px; font-weight: 400; line-height: 25px; color: #101426; }
.lead { font-size: 9px; line-height: 14px; color: #66708c; letter-spacing: .06px; }
.note { font-size: 9.1px; line-height: 14px; font-weight: 700; color: #333b5e; letter-spacing: .08px; }
.edge-btn { position: absolute; left: 852px; width: 50px; height: 19px; border-radius: 4px; font-size: 8px; line-height: 17px; padding-left: 5px; }
.outline { top: 77px; border: 1px solid #6b7186; background: #fff; }
.add { left: 851px; top: 141px; background: #5bdcff; font-size: 12px; font-weight: 700; padding-left: 4px; }
.orders { margin-left: 12px; height: 250px; background: #fff; border-radius: 4px 0 0 4px; box-shadow: 0 0 4px #dfe6ee; padding: 13px 0 0 20px; position: relative; }
.orders h3 { font-size: 9.2px; line-height: 14px; color: #4787d8; letter-spacing: .02px; }
.table { margin-top: 12px; font-size: 8px; color: #5a607c; }
.tr { display: grid; grid-template-columns: 129.500px 152px 134.500px 182.500px 141px 100px; align-items: center; height: 32.7px; padding-left: 13px; border-bottom: 1.500px solid #f1f2f4; white-space: nowrap; }
.tr.th { height: 27.5px; font-size: 6.8px; font-weight: 700; color: #4b5070; border-bottom-width: 1px; padding-top: 4px; }
.ok, .no { font-weight: 700; color: #19a392; font-size: 8.1px; }
.tr .no { color: #f5403c; }
.tr em { display: block; width: max-content; font: 700 7.4px/19px Roboto, sans-serif; padding: 0 6.500px; border-radius: 10px; color: #12351a; }
.delivered { background: #0cb012; }
.going { background: #acffa8; }
.tr .confirmed { background: #1ebdcc; color: #0d2d35; }
.tr .standby { background: #cbcbcb; color: #222; }
.acts { display: flex; align-items: center; }
.eye { width: 10px; height: 7px; color: #13a08f; margin-right: 5px; }
.bin { width: 8px; height: 9px; color: #a0a0a0; }
.bin.red { color: #f0423f; margin-left: -2px; }
.pager { display: flex; gap: 3px; margin: 12px 0 0 10px; }
.pager span { width: 18px; height: 18px; border: 1px solid #ececef; border-radius: 2px; display: grid; place-items: center; font: 500 8px Roboto, sans-serif; color: #2e79cf; }
.pager svg { width: 5px; height: 7px; fill: none; stroke: #777; stroke-width: 1.1; }
.pager .on { background: #e3effb; border-color: #a5cdf0; }
.tabs { display: flex; font-family: Roboto, sans-serif; font-size: 8.2px; color: #666; background: #fff; text-align: center; letter-spacing: .12px; }
.tabs span { flex: 1; border-bottom: 1px solid #e4e7eb; }
.tabs .on { color: #2e76cc; font-weight: 500; border-bottom: 1px solid #1976d2; box-shadow: 0 .5px 0 #1976d2; }
.upper { width: 867px; margin: 14px 0 0 18px; border-top: 1px solid #e6eaee; border-left: 1px solid #e6eaee; border-radius: 5px; height: 60px; }
.upper span { height: 28px; line-height: 26px; }

.bottom { display: flex; height: 494px; width: 1176px; margin-left: 203px; background: #f5f8fc; }
.side { width: 165px; flex: none; background: #272b40; border-left: 1px solid #6b2038; overflow: hidden; padding: 0 15px 0 16px; }
.side a { display: flex; align-items: center; height: 28.5px; margin-bottom: 2.3px; padding-left: 8px; border: 1px solid transparent; border-radius: 5px; color: #f2f4fa; font-size: 10.3px; letter-spacing: .08px; }
.side a:first-child { margin-top: -10.500px; }
.side a svg { width: 13px; height: 11.500px; margin-right: 8px; fill: #fff; flex: none; }
.side .on { background: #2e3650; border-color: #3e4869; }
.side hr { border: 0; border-top: 1px solid #323853; margin: 12.3px 0 9.300px; }
.content { width: 990px; margin-left: 10px; background: #fff; border-right: 1px solid #eceff5; border-left: 1px solid #eceff5; }
.lower { height: 29px; }
.lower span { line-height: 28px; font-size: 8.800px; }
.map-card { margin: 16px 0 0 15px; width: 959px; height: 439px; border: 1px solid #e9ebee; border-radius: 5px; padding: 5px 0 0 5px; }
.map { position: relative; width: 957px; height: 427px; overflow: hidden; }
.world { display: block; width: 957px; height: 427px; }
.land { fill: #f2efe9; stroke: #9f86ac; stroke-width: 1; }
.land path { stroke-width: 3; }
.field { fill: #f0f2d8; }
.wood { fill: #b8d8aa; }
.wood.small { fill: #c1e5b5; }
.urban { fill: #e0dcdb; }
.water { fill: #aad3df; stroke: #93bccb; stroke-width: 2; }
.lines path { fill: none; stroke-linejoin: round; stroke-width: 3; }
.lines .minor { stroke: #cbc9c9; stroke-width: 2.500; }
.lines .admin { stroke: #c3aac8; stroke-width: 2.800; stroke-dasharray: 14 3; }
.lines .strong { stroke: #ac91b4; stroke-width: 4; stroke-dasharray: none; }
.lines .rail { stroke: #979693; }
.lines .river { stroke: #8dbbd2; stroke-width: 3.500; }
.lines .orange { stroke: #f6b868; stroke-width: 4; }
.lines .red { stroke: #f1927a; stroke-width: 4; }
.lines .motor { stroke: #dd496e; stroke-width: 4.500; }
.lines .brown { stroke: #9d7a62; stroke-width: 3.500; }
.ferry { fill: none; stroke: #82aae8; stroke-width: 1; stroke-dasharray: 3 2; }
.frontier { fill: none; stroke: #9c7fa9; stroke-width: 1.600; }
.park { fill: none; stroke: #75b58c; stroke-width: 1.500; }
.route { fill: none; stroke: #4a80e8; stroke-width: 3.300; stroke-linejoin: round; stroke-linecap: round; }
.labels { font: 8px "DejaVu Sans", sans-serif; fill: #9a72a6; text-anchor: middle; paint-order: stroke; stroke: rgba(255,255,255,.65); stroke-width: 1.500px; }
.town { fill: #333; font-size: 7px; }
.city { font-size: 9px; }
.green { fill: #44915a; font-size: 7px; }
.sea { fill: #6590d3; font-size: 7px; stroke: none; }
.controls { position: absolute; left: 6px; top: 6px; }
.zoom { width: 21px; border: 1px solid #7c9da6; border-radius: 3px; background: #fff; overflow: hidden; }
.zoom span { display: block; height: 19px; }
.zoom span + span { border-top: 1px solid #ccc; }
.zoom svg { display: block; width: 19px; height: 18px; fill: none; stroke: #111; stroke-width: 1.700; }
.one { margin-top: 7px; }
.route-panel { position: absolute; left: 750px; top: 6px; width: 200.500px; height: 210.500px; border: 1px solid #7b9ca6; border-radius: 3px; background: #fff; overflow: hidden; color: #5d6288; font: 7.500px/11px "Liberation Sans", "DejaVu Sans", sans-serif; white-space: nowrap; }
.route-panel::after { content: ""; position: absolute; left: 0; right: 0; bottom: 0; height: 4px; background: #fff; }
.bar { position: absolute; right: 0; top: 4px; width: 5px; height: 201px; background: linear-gradient(#888 76px, #f1f1f1 76px); }
.route-panel h4 { direction: rtl; width: 230px; font-size: 7.600px; line-height: 12px; color: #30344f; margin: 6px 0 0 -42px; transform: scaleX(.81); transform-origin: right; }
.sum { font-family: Lato, sans-serif; font-size: 8px; margin: 5px 0 5.500px 3px; color: #6f7590; }
.step { display: grid; grid-template-columns: 18px 142px 30px; align-items: center; height: 13.800px; }
.two { height: 24px; }
.last { align-items: start; }
.last svg, .last span:last-child { margin-top: 6px; }
.step svg { width: 9px; height: 9px; margin-left: 6px; }
.step bdi { font-size: 6.600px; line-height: 9px; }
.credit { position: absolute; right: 0; bottom: 0; height: 11px; padding: 0 3px; background: rgba(255,255,255,.8); font: 7.600px/10.500px "Liberation Sans", sans-serif; color: #333; }
.credit a { color: #0078a8; }
```
